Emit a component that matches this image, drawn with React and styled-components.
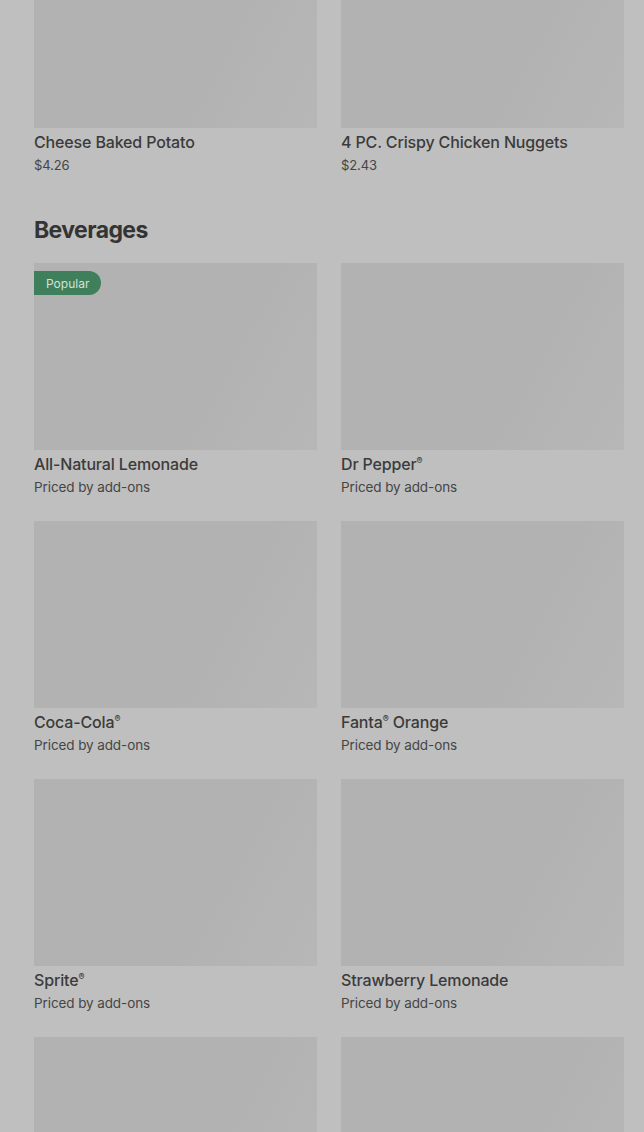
import React from "react";
import styled, { createGlobalStyle } from "styled-components";

const GlobalStyle = createGlobalStyle`
  html, body {
    margin: 0;
    padding: 0;
    background: #bfbfbf;
    font-family: Inter, "Liberation Sans", sans-serif;
    overflow: hidden;
  }
`;

const Page = styled.div`
  padding: 0 20px 0 34px;
  margin-top: -59px;
  height: 1191px;
  overflow: hidden;
`;

const Grid = styled.div`
  display: grid;
  grid-template-columns: 283px 283px;
  column-gap: 24px;
  row-gap: 24px;
`;

const Section = styled.section`
  margin-top: 41px;
  h2 {
    margin: 0 0 19px;
    font-size: 23px;
    line-height: 28px;
    font-weight: 700;
    letter-spacing: -0.6px;
    color: #343434;
  }
`;

const Card = styled.div`
  display: flex;
  flex-direction: column;
  .thumb {
    position: relative;
    height: 187px;
    background: linear-gradient(118deg, #b2b2b2 0%, #b2b2b2 62%, #b7b7b7 100%);
  }
  .name {
    margin-top: 4px;
    font-size: 16px;
    line-height: 20px;
    font-weight: 500;
    letter-spacing: -0.15px;
    color: #3b3b3b;
    sup {
      font-size: 9px;
      line-height: 0;
      vertical-align: 6px;
    }
  }
  .sub {
    margin-top: 3px;
    font-size: ${(p) => (p.$price ? "13px" : "13.5px")};
    line-height: 20px;
    color: #454545;
    letter-spacing: -0.1px;
  }
`;

const Badge = styled.span`
  position: absolute;
  top: 8px;
  left: 0;
  height: 24px;
  padding: 0 12px;
  display: flex;
  align-items: center;
  border-radius: 0 12px 12px 0;
  background: #3f7f5b;
  color: #d2e2d8;
  font-size: 12px;
`;

function Item({ name, reg, sub, popular, price }) {
  return (
    <Card $price={price}>
      <div className="thumb">{popular && <Badge>Popular</Badge>}</div>
      {name && (
        <>
          <div className="name">
            {name}
            {reg && <sup>®</sup>}
            {reg === "mid" && " Orange"}
          </div>
          <div className="sub">{sub}</div>
        </>
      )}
    </Card>
  );
}

const sides = [
  { name: "Cheese Baked Potato", sub: "$4.26" },
  { name: "4 PC. Crispy Chicken Nuggets", sub: "$2.43" },
];

const drinks = [
  { name: "All-Natural Lemonade", popular: true },
  { name: "Dr Pepper", reg: true },
  { name: "Coca-Cola", reg: true },
  { name: "Fanta", reg: "mid" },
  { name: "Sprite", reg: true },
  { name: "Strawberry Lemonade" },
  { id: "more-1" },
  { id: "more-2" },
];

export default function App() {
  return (
    <Page>
      <GlobalStyle />
      <Grid>
        {sides.map((s) => (
          <Item key={s.name} {...s} price />
        ))}
      </Grid>
      <Section>
        <h2>Beverages</h2>
        <Grid>
          {drinks.map((d) => (
            <Item key={d.name || d.id} {...d} sub="Priced by add-ons" />
          ))}
        </Grid>
      </Section>
    </Page>
  );
}
